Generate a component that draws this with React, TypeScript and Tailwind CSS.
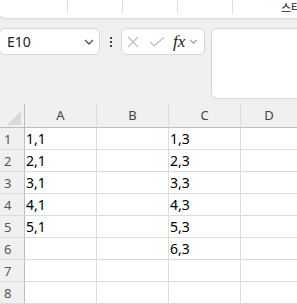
import React from "react";

const rows: [string, string, string][] = [
  ["1", "1,1", "1,3"],
  ["2", "2,1", "2,3"],
  ["3", "3,1", "3,3"],
  ["4", "4,1", "4,3"],
  ["5", "5,1", "5,3"],
  ["6", "", "6,3"],
  ["7", "", ""],
  ["8", "", ""],
];

function Chevron({ className }: { className?: string }) {
  return (
    <svg viewBox="0 0 10 6" className={className} fill="none" stroke="currentColor" strokeWidth="1.3">
      <path d="M1 1l4 4 4-4" />
    </svg>
  );
}

export default function App() {
  return (
    <div
      className="w-[297px] h-[304px] overflow-hidden bg-[#f0f0f0] relative"
      style={{ fontFamily: '"Noto Sans", "Noto Sans CJK KR", sans-serif' }}
    >
      {/* ribbon strip */}
      <div className="h-[18px] bg-white rounded-b-[8px] shadow-[0_1px_3px_rgba(0,0,0,0.12)] flex ml-[-2px] w-[320px]">
        <div className="w-[70px] h-[14px] border-r border-[#e0e0e0]" />
        <div className="w-[55px] h-[14px] border-r border-[#e0e0e0]" />
        <div className="w-[55px] h-[14px] border-r border-[#e0e0e0]" />
        <div className="w-[55px] h-[14px] border-r border-[#e0e0e0]" />
        <div className="flex-1 flex items-start pl-[48px] pt-[1px]">
          <span className="text-[11px] leading-[13px] text-[#222] whitespace-nowrap">스타</span>
        </div>
      </div>

      {/* formula row */}
      <div className="flex items-start mt-[10px] h-[71px]">
        <div className="w-[101px] h-[27px] ml-[-1px] bg-white border border-[#d6d6d6] rounded-[6px] flex items-center pl-[7px] pr-[4px]">
          <span className="text-[14px] text-[#222] flex-1 leading-none">E10</span>
          <Chevron className="w-[10px] h-[6px] text-[#555] mr-[1px]" />
        </div>
        <div className="w-[21px] h-[27px] flex flex-col items-center justify-center gap-[2px]">
          <div className="w-[2px] h-[2px] bg-[#444]" />
          <div className="w-[2px] h-[2px] bg-[#444]" />
          <div className="w-[2px] h-[2px] bg-[#444]" />
        </div>
        <div className="w-[84px] h-[27px] bg-white border border-[#d6d6d6] rounded-[6px] flex items-center pl-[5px]">
          <svg viewBox="0 0 12 12" className="w-[12px] h-[12px] text-[#bdbdbd]" fill="none" stroke="currentColor" strokeWidth="1.1">
            <path d="M1 1l10 10M11 1L1 11" />
          </svg>
          <svg viewBox="0 0 16 10" className="w-[16px] h-[10px] ml-[10px] text-[#bdbdbd]" fill="none" stroke="currentColor" strokeWidth="1.1">
            <path d="M1 5l4 4 10-8.5" />
          </svg>
          <span
            className="ml-[8px] text-[17px] italic text-[#222] leading-none"
            style={{ fontFamily: '"Liberation Serif", serif' }}
          >
            fx
          </span>
          <Chevron className="w-[9px] h-[5px] ml-[4px] text-[#999]" />
        </div>
        <div className="flex-1 h-[71px] ml-[6px] mr-[-10px] bg-white border border-[#d6d6d6] rounded-[6px]" />
      </div>

      {/* grid */}
      <div className="mt-[5px]">
        <div
          className="grid"
          style={{ gridTemplateColumns: "25px 72px 72px 72px 1fr" }}
        >
          {/* header */}
          <div className="h-[24px] border-r border-b border-[#bdbdbd] relative">
            <svg className="absolute left-[7px] top-[7px]" width="14" height="14" viewBox="0 0 14 14">
              <path d="M14 0L14 14L0 14Z" fill="#dadada" />
            </svg>
          </div>
          {["A", "B", "C", "D"].map((c, i) => (
            <div
              key={c}
              className={`h-[24px] border-b border-[#bdbdbd] flex items-center justify-center text-[13px] text-[#444] ${
                i < 3 ? "border-r border-r-[#dcdcdc]" : ""
              }`}
            >
              <span className="pt-[1px]">{c}</span>
            </div>
          ))}
          {rows.map(([n, a, c]) => (
            <React.Fragment key={n}>
              <div className="h-[22px] border-r border-[#bdbdbd] border-b border-b-[#dcdcdc] flex items-end pl-[4px] pb-[2px] text-[13px] leading-[16px] text-[#555]">
                {n}
              </div>
              <div className="h-[22px] bg-white border-r border-b border-[#dcdcdc] flex items-end pl-[1px] pb-[2px] text-[14px] leading-[17px] text-black">
                {a}
              </div>
              <div className="h-[22px] bg-white border-r border-b border-[#dcdcdc]" />
              <div className="h-[22px] bg-white border-r border-b border-[#dcdcdc] flex items-end pl-[1px] pb-[2px] text-[14px] leading-[17px] text-black">
                {c}
              </div>
              <div className="h-[22px] bg-white border-b border-[#dcdcdc]" />
            </React.Fragment>
          ))}
        </div>
      </div>
    </div>
  );
}
